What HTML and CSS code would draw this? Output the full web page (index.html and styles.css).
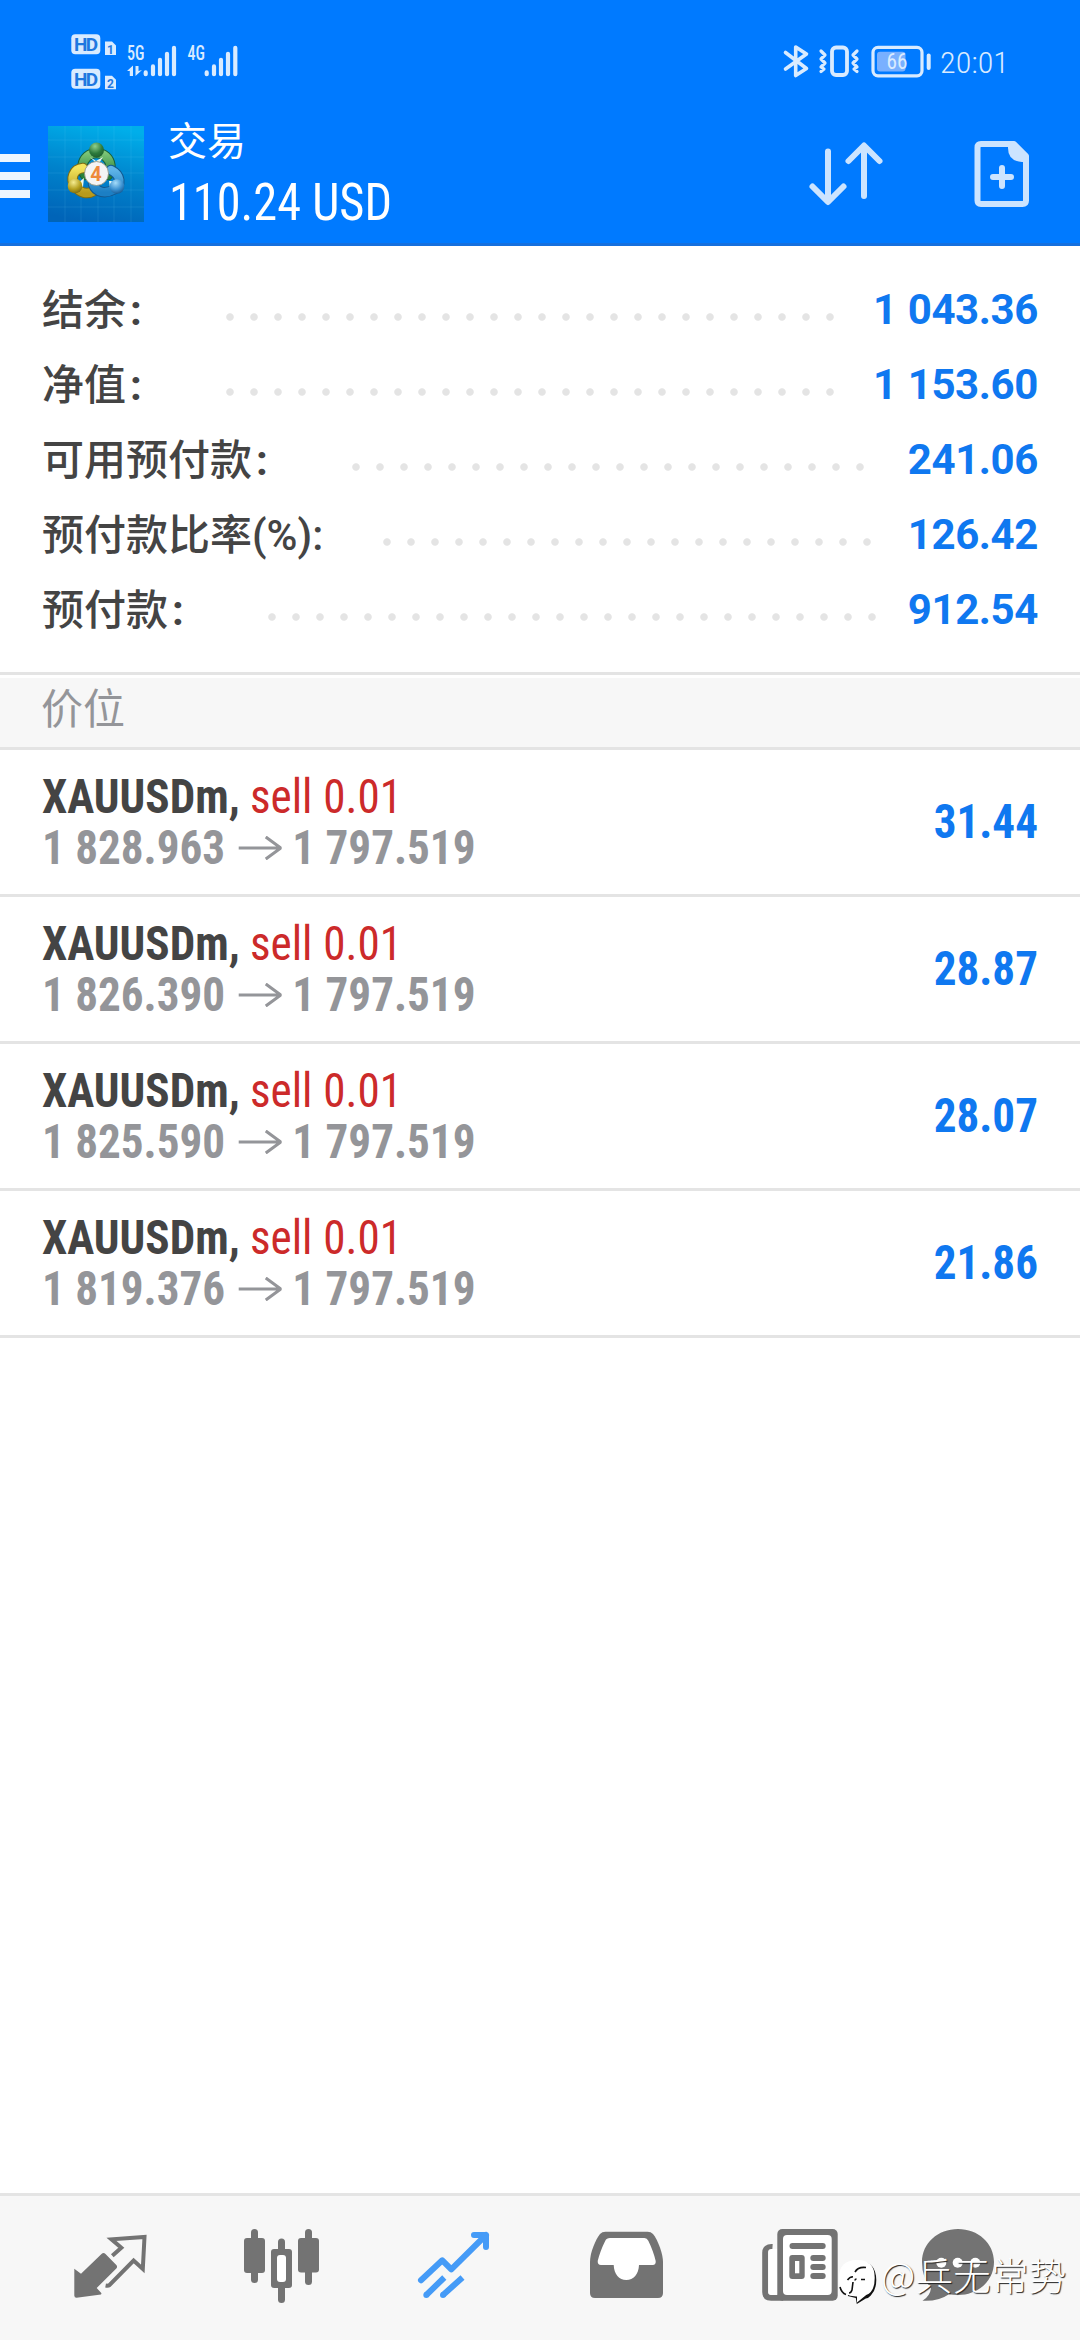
FILE: index.html
```html
<!DOCTYPE html>
<html lang="zh-CN">
<head>
<meta charset="utf-8">
<title>交易</title>
<link rel="stylesheet" href="styles.css">
</head>
<body>
<div class="app">
  <header class="header">
    <div class="status">
      <svg class="status-left" width="200" height="102" viewBox="60 0 200 102" fill="#d9ebff">
        <rect x="71.3" y="34.3" width="29" height="20" rx="4"/>
        <rect x="71.3" y="68.7" width="29" height="20" rx="4"/>
        <text class="hd" x="74" y="51.3" textLength="24">HD</text>
        <text class="hd" x="74" y="85.7" textLength="24">HD</text>
        <path d="M105 41.5h7l4 4V55h-11zM105 75.8h7l4 4v9.400h-11z"/>
        <text class="sim" x="107" y="53.500">1</text>
        <text class="sim" x="107" y="87.600">2</text>
        <text class="net" x="127" y="59.800" textLength="17.500" lengthAdjust="spacingAndGlyphs">5G</text>
        <text class="net" x="187.500" y="59.800" textLength="17.500" lengthAdjust="spacingAndGlyphs">4G</text>
        <path d="M127 71l6-5.500V76h-3.200v-5zM135.500 66h3v5l3.500-1-6.500 6z"/>
        <g stroke="#d9ebff" stroke-width="4.200" stroke-linecap="round">
          <path d="M145.700 72.400v1.800M153 66.400v7.800M160 59.800v14.400M167 53.800v20.400M174 47.800v26.400"/>
          <path d="M206.700 72.400v1.800M214 66.400v7.800M221 59.800v14.400M228 53.800v20.400M235.300 47.800v26.400"/>
        </g>
      </svg>
      <svg class="status-right" width="240" height="102" viewBox="780 0 240 102" fill="none" stroke="#d9ebff" stroke-linecap="round" stroke-linejoin="round">
        <path stroke-width="3.600" d="M785.500 52.500l21 16L795.700 75.500V47l10.800 7-21 15"/>
        <rect x="832" y="47.500" width="15" height="27.500" rx="4" stroke-width="3.800"/>
        <path stroke-width="3.200" d="M821 51l4 4-4 4 4 4-4 4 3 2-3 2.500M857 51l-4 4 4 4-4 4 4 4-3 2 3 2.500"/>
        <rect x="873" y="47.300" width="49" height="28.500" rx="5" stroke-width="3.200"/>
        <rect x="877" y="51.700" width="28.500" height="19.800" rx="3" fill="#79b0ff" stroke="none"/>
        <path stroke-width="4" d="M928.700 55.500v12.500"/>
        <text class="batt" x="886.500" y="68.700" textLength="21" lengthAdjust="spacingAndGlyphs">66</text>
        <text class="clock" x="940" y="72.500" textLength="69" lengthAdjust="spacingAndGlyphs">20:01</text>
      </svg>
    </div>
    <div class="toolbar">
      <div class="burger"><i></i><i></i><i></i></div>
      <svg class="logo" width="96" height="96" viewBox="0 0 96 96">
        <defs>
          <linearGradient id="bg" x1=".6" y1="0" x2=".4" y2="1"><stop offset="0" stop-color="#00aeea"/><stop offset=".5" stop-color="#0083cc"/><stop offset="1" stop-color="#0064b8"/></linearGradient>
          <linearGradient id="gr" x1="0" y1="0" x2="0" y2="1"><stop offset="0" stop-color="#7cc576"/><stop offset="1" stop-color="#27803a"/></linearGradient>
          <linearGradient id="ye" x1="0" y1="0" x2="0" y2="1"><stop offset="0" stop-color="#f3e45c"/><stop offset="1" stop-color="#b89a1c"/></linearGradient>
          <linearGradient id="bl" x1="0" y1="0" x2="0" y2="1"><stop offset="0" stop-color="#5fb4e8"/><stop offset="1" stop-color="#1c7fc4"/></linearGradient>
          <radialGradient id="gb" cx=".4" cy=".25" r=".8"><stop offset="0" stop-color="#8fd08c"/><stop offset=".6" stop-color="#2c7a3c"/><stop offset="1" stop-color="#1d5c2c"/></radialGradient>
          <radialGradient id="yb" cx=".4" cy=".25" r=".8"><stop offset="0" stop-color="#f5ec90"/><stop offset=".6" stop-color="#b5a01e"/><stop offset="1" stop-color="#776610"/></radialGradient>
          <radialGradient id="bb" cx=".4" cy=".25" r=".8"><stop offset="0" stop-color="#a5dcfa"/><stop offset=".6" stop-color="#3a90d0"/><stop offset="1" stop-color="#14568f"/></radialGradient>
        </defs>
        <rect width="96" height="96" fill="url(#bg)"/>
        <path d="M17 0v96M33 0v96M50 0v96M66 0v96M83 0v96M0 14h96M0 31h96M0 47h96M0 64h96M0 81h96" stroke="#7fd4ff" stroke-opacity=".12"/>
        <g fill="none" stroke-linecap="round">
          <path d="M37 49a14 14 0 1 1 23 0" stroke="#17603a" stroke-width="10.500"/>
          <path d="M37 49a14 14 0 1 1 23 0" stroke="url(#gr)" stroke-width="8.500"/>
          <path d="M35 42C25 43 22 53 27 60S39 69 46 65" stroke="#7d6c14" stroke-width="10.500"/>
          <path d="M35 42C25 43 22 53 27 60S39 69 46 65" stroke="url(#ye)" stroke-width="8.500"/>
          <path d="M63 44C73 49 74 59 66 63.500S48 67 45 58" stroke="#13588f" stroke-width="10.500"/>
          <path d="M63 44C73 49 74 59 66 63.500S48 67 45 58" stroke="url(#bl)" stroke-width="8.500"/>
        </g>
        <path d="M42 31l6 4 7-4-5 8zM30 57l6-5-1 9zM61 55l4 0-3 7z" fill="#eef8ee"/>
        <circle cx="48.500" cy="24" r="7.500" fill="url(#gb)"/>
        <circle cx="27" cy="60" r="7.300" fill="url(#yb)"/>
        <circle cx="69" cy="60.500" r="7.300" fill="url(#bb)"/>
        <circle cx="48.500" cy="47.500" r="12" fill="#f4f4f4" stroke="#8b8b75" stroke-width=".8"/>
        <text class="four" x="48" y="54.500" text-anchor="middle">4</text>
      </svg>
      <div class="titles">
        <div class="title">交易</div>
        <div class="total cond">110.24 USD</div>
      </div>
      <svg class="actions" width="240" height="141" viewBox="800 102 240 141" fill="none" stroke="#cce4ff" stroke-width="6" stroke-linecap="round" stroke-linejoin="round">
        <path d="M828 151.500v50M812.500 186.500l15.500 15.500L843.500 186.500M864 196V146M848.500 161l15.500-15.500L879.500 161"/>
        <path d="M1014 144H981q-3.500 0-3.500 3.500v53q0 3.500 3.500 3.500h41.500q3.500 0 3.500-3.500V156z"/>
        <path stroke="none" fill="#cce4ff" d="M1008 144h6l13 12v6h-5q-14-1-14-14z"/>
        <path d="M993 177h18M1002 168v18"/>
      </svg>
    </div>
  </header>

  <section class="account">
    <div class="line"><span class="label l1">结余<b>:</b></span><i class="dots n26"></i><span class="amount">1 043.36</span></div>
    <div class="line"><span class="label l1">净值<b>:</b></span><i class="dots n26"></i><span class="amount">1 153.60</span></div>
    <div class="line"><span class="label l3">可用预付款<b>:</b></span><i class="dots n22"></i><span class="amount">241.06</span></div>
    <div class="line"><span class="label l4">预付款比率<b class="tight">(%):</b></span><i class="dots n21"></i><span class="amount">126.42</span></div>
    <div class="line"><span class="label l5">预付款<b>:</b></span><i class="dots n26"></i><span class="amount">912.54</span></div>
  </section>

  <h2 class="section">价位</h2>

  <ul class="positions">
    <li class="position">
      <div class="deal cond"><div class="name"><b>XAUUSDm,</b> <span class="sell">sell 0.01</span></div>
      <div class="prices"><span>1 828.963</span><svg class="arrow" width="46" height="24" viewBox="0 0 46 24"><path d="M0 12h45M29 1l16 11-16 11"/></svg><span>1 797.519</span></div></div>
      <div class="profit cond">31.44</div>
    </li>
    <li class="position">
      <div class="deal cond"><div class="name"><b>XAUUSDm,</b> <span class="sell">sell 0.01</span></div>
      <div class="prices"><span>1 826.390</span><svg class="arrow" width="46" height="24" viewBox="0 0 46 24"><path d="M0 12h45M29 1l16 11-16 11"/></svg><span>1 797.519</span></div></div>
      <div class="profit cond">28.87</div>
    </li>
    <li class="position">
      <div class="deal cond"><div class="name"><b>XAUUSDm,</b> <span class="sell">sell 0.01</span></div>
      <div class="prices"><span>1 825.590</span><svg class="arrow" width="46" height="24" viewBox="0 0 46 24"><path d="M0 12h45M29 1l16 11-16 11"/></svg><span>1 797.519</span></div></div>
      <div class="profit cond">28.07</div>
    </li>
    <li class="position">
      <div class="deal cond"><div class="name"><b>XAUUSDm,</b> <span class="sell">sell 0.01</span></div>
      <div class="prices"><span>1 819.376</span><svg class="arrow" width="46" height="24" viewBox="0 0 46 24"><path d="M0 12h45M29 1l16 11-16 11"/></svg><span>1 797.519</span></div></div>
      <div class="profit cond">21.86</div>
    </li>
  </ul>

  <nav class="tabs">
    <svg viewBox="24 0 172 144">
      <path d="M74.300 72.700l6.700 5L101.500 58q2-2 4 0L116.300 69q1.500 1.700 0 3.500L96.700 92l4.800 5.300L101 98.500l-24.500 3.300q-2.200 0-2.200-2.200z"/>
      <path fill="none" stroke="#737373" stroke-width="4" d="M112.300 59.700l9-8L111.500 43.300l33-2.300-1.700 32L133.600 64.500l-24 24.500q-1.500 1-4 .5"/>
    </svg>
    <svg viewBox="196 0 172 144">
      <rect x="251" y="33" width="7" height="54" rx="3.500"/><rect x="244" y="42" width="21" height="35" rx="3"/>
      <rect x="278" y="42.500" width="7" height="64.500" rx="3.500"/><rect x="271" y="53" width="21" height="39" rx="3"/><rect x="277" y="59" width="9" height="27" rx="3" fill="#fff"/>
      <rect x="305" y="33" width="7" height="56" rx="3.500"/><rect x="298" y="42" width="21" height="34.500" rx="3"/>
    </svg>
    <svg viewBox="368 0 172 144">
      <g fill="none" stroke="#459bf7" stroke-width="6" stroke-linejoin="round">
        <path stroke-linecap="round" d="M421 84.300l21.300-20 9 9L486 39M474 39h12v12"/>
        <path d="M426.300 99l18-17.500M443 99l19.500-17.500"/>
      </g>
      <g fill="#459bf7"><circle cx="426.300" cy="99" r="3"/><circle cx="443" cy="99" r="3"/></g>
    </svg>
    <svg viewBox="540 0 172 144">
      <path d="M590 66C590 56 596 43 600 38q2-2.300 5.500-2.300h42q3.500 0 5.500 2.300C658 44 663 58 663 66V97q0 5-5 5H595q-5 0-5-5z"/>
      <path fill="#fff" d="M610 42h34.500q2.500 0 3.800 2.700c3.500 7 6 14 7.400 20.300q.3 4-3 4H639c-.3 9-5.500 15-12.700 15S614 78 613.700 69H601q-3.500 0-3.300-4c1.500-6.300 4-13.300 7.600-20.300Q606.500 42 610 42z"/>
    </svg>
    <svg viewBox="712 0 172 144">
      <path fill="none" stroke="#737373" stroke-width="6" d="M772.500 51q-7.300-.5-7.300 6v39q0 5.700 6 5.700h12"/>
      <path fill="#fff" d="M768.200 56q0-3 3-3h6.300v46h-6.300q-3 0-3-3z"/>
      <rect x="777.300" y="33" width="60.400" height="71.700" rx="5"/><rect x="783" y="39" width="48.700" height="60" rx="4" fill="#fff"/>
      <rect x="789.500" y="47" width="36.200" height="6" rx="3"/><rect x="789.300" y="59" width="15.400" height="24" rx="3"/><rect x="795" y="65" width="4.300" height="12.300" fill="#fff"/>
      <rect x="810.300" y="59" width="15.400" height="6" rx="3"/><rect x="810.300" y="68" width="15.400" height="6" rx="3"/><rect x="810.300" y="77" width="15.400" height="6" rx="3"/>
    </svg>
    <svg viewBox="884 0 172 144">
      <path d="M958 33c20 0 36 14 36 33s-16 33-36 33q-5 0-9-.8-11 7.500-26.500 6.500 7.500-4.500 8.500-12.500Q922 82 922 66c0-19 16-33 36-33z"/>
      <g fill="#fff"><circle cx="941.300" cy="66.700" r="5"/><circle cx="957.700" cy="66.700" r="5"/><circle cx="975.300" cy="66.700" r="5"/></g>
    </svg>
  </nav>

  <div class="watermark">
    <svg width="40" height="46" viewBox="838 2259 40 46">
      <path fill="#111" d="M861 2261.500q15 1 15.300 18.500 0 10-5.500 15.500-2 2.500-5 3l-9 5.500-1-6-8-2z"/>
      <path fill="#fff" d="M857 2260q18 0 17.700 18 0 14-8.500 17l-9.200 7.500v-6q-18 .5-18-18.500 0-18 18-18z"/>
      <path fill="none" stroke="#111" stroke-width="1.600" d="M866 2267.500q-8-1-11 4.500M855 2280.500q0-1.500 1.500-1.500M847.500 2280q2-3 5.500-3.300M861 2279.500h4M853 2282l-1 8q-1 3-3 3M840 2287q1.500 6 6 7.500"/>
    </svg>
    <span>@兵无常势</span>
  </div>
</div>
</body>
</html>
```
FILE: styles.css
```css
* { box-sizing: border-box; }
body { margin: 0; background: #fff; }
.app {
  position: relative;
  display: flex;
  flex-direction: column;
  width: 1080px;
  height: 2340px;
  background: #fff;
  font-family: Roboto, "Noto Sans CJK SC", sans-serif;
}
svg { display: block; flex: none; }
.cond { font-family: "Roboto Condensed", Roboto, sans-serif; transform: scaleX(.94); transform-origin: 0 0; }

.header { height: 246px; flex: none; background: #007aff; border-bottom: 3px solid #1670de; color: #fff; }
.status { display: flex; justify-content: space-between; height: 102px; padding: 0 60px; }
.status text { stroke: none; font-family: "Roboto Condensed", Roboto, sans-serif; fill: #d9ebff; }
.status .hd { font: 700 19px Roboto, sans-serif; fill: #1f78e0; }
.status .sim { font: 700 12px Roboto, sans-serif; fill: #1f78e0; }
.status .net { font-size: 20px; font-weight: 500; }
.status .batt { font-size: 22px; }
.status .clock { font-size: 30px; font-weight: 300; }

.toolbar { display: flex; height: 141px; }
.burger { display: flex; flex-direction: column; gap: 10px; width: 30px; padding-top: 52px; margin-right: 18px; }
.burger i { height: 8px; background: #eef6ff; }
.logo { margin-top: 24px; }
.four { font: 700 20px Roboto, sans-serif; fill: #ee8a3c; }
.titles { flex: 1; padding: 15px 0 0 24px; }
.title { font-size: 39px; line-height: 50px; }
.total { margin: 6px 0 0 1px; font-size: 51px; line-height: 60px; white-space: nowrap; transform: scaleX(.948); }
.actions { margin-right: 40px; }

.account { flex: none; height: 429px; padding: 26px 42px 0; border-bottom: 3px solid #e4e4e4; }
.line { display: flex; height: 75px; line-height: 75px; font-size: 42px; white-space: nowrap; }
.label { color: #444; font-weight: 500; line-height: 78px; }
.label b { margin-left: 4px; }
.label .tight { margin-left: 0; font-weight: 500; }
.l1 { width: 176px; }
.l3 { width: 302px; }
.l4 { width: 333px; }
.l5 { width: 218px; }
.dots { height: 90px; background: radial-gradient(circle at 50% 50%, #e4e4e4 3.300px, transparent 4.200px) 0 0 / 24px 90px repeat-x; }
.n21 { width: 504px; }
.n22 { width: 528px; }
.n26 { width: 624px; }
.amount { margin-left: auto; color: #0f78f0; font-weight: 700; letter-spacing: -.4px; word-spacing: 1px; }

.section { flex: none; height: 72px; margin: 3px 0 0; border-bottom: 3px solid #e4e4e4; background: #f7f7f7; padding-left: 41px; font-size: 42px; font-weight: 400; line-height: 64px; color: #949599; }

.positions { flex: 1; margin: 0; padding: 0; list-style: none; font-size: 48px; line-height: 51px; }
.position { display: flex; justify-content: space-between; height: 147px; padding: 21px 42px 0; border-bottom: 3px solid #e4e4e4; white-space: nowrap; }
.name { color: #444; }
.sell { color: #cc2a2a; word-spacing: .500px; }
.prices { display: flex; align-items: center; color: #949599; font-weight: 700; }
.arrow { margin: 0 11.500px 0 14px; fill: none; stroke: #949599; stroke-width: 3.200; }
.profit { padding-top: 25px; color: #0f78f0; font-weight: 700; transform-origin: 100% 0; }

.tabs { display: flex; flex: none; height: 147px; padding: 0 24px; border-top: 3px solid #e4e4e4; background: #f7f7f7; }
.tabs svg { width: 172px; height: 144px; fill: #737373; }

.watermark { position: absolute; left: 838px; top: 2259px; display: flex; gap: 3px; }
.watermark span { margin-top: -4px; font-size: 37.500px; line-height: 38px; letter-spacing: .3px; font-weight: 300; color: #fff; text-shadow: 1px 1px 1px #222; font-family: "Noto Sans CJK SC", sans-serif; white-space: nowrap; }
```
